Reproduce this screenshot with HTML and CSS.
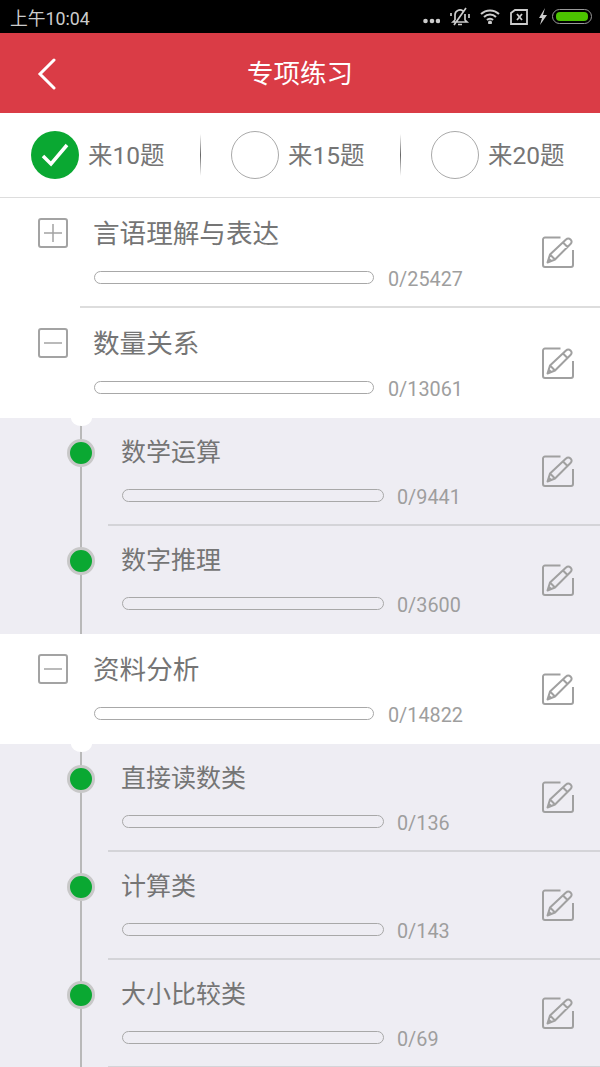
FILE: index.html
```html
<!DOCTYPE html>
<html lang="zh-CN">
<head>
  <meta charset="UTF-8">
  <title>专项练习</title>
  <link rel="stylesheet" href="styles.css">
</head>
<body>

<svg class="defs" width="0" height="0">
  <symbol id="edit" viewBox="0 0 32 32">
    <path d="M18.500 1.500H3a2 2 0 0 0-2 2v25.500a2 2 0 0 0 2 2h26a2 2 0 0 0 2-2V14" fill="none" stroke="#a0a0a0" stroke-width="2"/>
    <path d="M24 3.500c1.500-1.500 3-1.500 4.500 0s1.500 3 0 4.500L13 23.500 5.500 26.500 8 18.500zM21 6.500l5 5M8 18.500l5 5" fill="none" stroke="#a0a0a0" stroke-width="2" stroke-linejoin="round"/>
    <path d="M7.500 22l2.500 2.500-4.500 2z" fill="#a0a0a0"/>
  </symbol>
</svg>

<div class="status">
  <span class="clock">上午10:04</span>
  <div class="status-icons">
    <svg class="status-dots" width="18" height="6" viewBox="0 0 18 6"><circle cx="3.500" cy="3" r="2.300" fill="#ccc"/><circle cx="10" cy="3" r="2.300" fill="#ccc"/><circle cx="16" cy="3" r="2.300" fill="#ccc"/></svg>
    <svg width="20" height="20" viewBox="0 0 20 20" fill="none" stroke="#ccc" stroke-width="1.700"><path d="M5 13V8a5 5 0 0 1 8-4M15 7v6l2 2H3l2-2M8 17.500h4M1 9V6M19 11V7M16 1L4 18"/></svg>
    <svg width="20" height="15" viewBox="0 0 20 15" fill="none" stroke="#ccc" stroke-width="2"><path d="M1 5a13 13 0 0 1 18 0M4 8a8.500 8.500 0 0 1 12 0M7 11a4 4 0 0 1 6 0"/><circle cx="10" cy="13.500" r="1" fill="#ccc"/></svg>
    <svg width="18" height="16" viewBox="0 0 18 16" fill="none" stroke="#ccc" stroke-width="1.800"><path d="M5 1h12v14H1V4zM7 5l5 6M12 5l-5 6"/></svg>
    <svg width="10" height="17" viewBox="0 0 10 17"><path d="M7 0L1 10h3l-2 7 7-10H5z" fill="#ccc"/></svg>
    <div class="battery"><div class="battery-fill"></div></div>
  </div>
</div>

<div class="topbar">
  <svg class="back" width="20" height="32" viewBox="0 0 20 32" fill="none" stroke="#fff" stroke-width="3" stroke-linecap="round"><path d="M17 2L3 16l14 14"/></svg>
  <span>专项练习</span>
</div>

<div class="options">
  <div class="opt">
    <svg class="radio" width="48" height="48" viewBox="0 0 48 48"><circle cx="24" cy="24" r="24" fill="#0aa832"/><path d="M12 25l8 8 16-19" fill="none" stroke="#fff" stroke-width="3.500"/></svg>
    <span>来10题</span>
    <i class="opt-sep"></i>
  </div>
  <div class="opt">
    <div class="radio radio-off"></div>
    <span>来15题</span>
    <i class="opt-sep"></i>
  </div>
  <div class="opt">
    <div class="radio radio-off"></div>
    <span>来20题</span>
  </div>
</div>

<div class="list">
  <div class="row">
    <div class="mark"><svg width="30" height="30" viewBox="0 0 30 30" fill="none" stroke="#a3a3a3"><rect x="1" y="1" width="28" height="28" rx="2" stroke-width="2"/><path d="M6 15h18M15 6v18" stroke-width="1.500"/></svg></div>
    <div class="body">
      <div class="main">
        <div class="name">言语理解与表达</div>
        <div class="meter"><div class="bar"></div><span class="count">0/25427</span></div>
      </div>
      <svg class="edit"><use href="#edit"/></svg>
    </div>
  </div>

  <div class="row">
    <div class="mark"><svg width="30" height="30" viewBox="0 0 30 30" fill="none" stroke="#a3a3a3"><rect x="1" y="1" width="28" height="28" rx="2" stroke-width="2"/><path d="M6 15h18" stroke-width="1.500"/></svg></div>
    <div class="body no-line">
      <div class="main">
        <div class="name">数量关系</div>
        <div class="meter"><div class="bar"></div><span class="count">0/13061</span></div>
      </div>
      <svg class="edit"><use href="#edit"/></svg>
    </div>
  </div>

  <div class="row sub first">
    <div class="mark"><i class="dot"></i></div>
    <div class="body">
      <div class="main">
        <div class="name">数学运算</div>
        <div class="meter"><div class="bar"></div><span class="count">0/9441</span></div>
      </div>
      <svg class="edit"><use href="#edit"/></svg>
    </div>
  </div>

  <div class="row sub">
    <div class="mark"><i class="dot"></i></div>
    <div class="body no-line">
      <div class="main">
        <div class="name">数字推理</div>
        <div class="meter"><div class="bar"></div><span class="count">0/3600</span></div>
      </div>
      <svg class="edit"><use href="#edit"/></svg>
    </div>
  </div>

  <div class="row">
    <div class="mark"><svg width="30" height="30" viewBox="0 0 30 30" fill="none" stroke="#a3a3a3"><rect x="1" y="1" width="28" height="28" rx="2" stroke-width="2"/><path d="M6 15h18" stroke-width="1.500"/></svg></div>
    <div class="body no-line">
      <div class="main">
        <div class="name">资料分析</div>
        <div class="meter"><div class="bar"></div><span class="count">0/14822</span></div>
      </div>
      <svg class="edit"><use href="#edit"/></svg>
    </div>
  </div>

  <div class="row sub first">
    <div class="mark"><i class="dot"></i></div>
    <div class="body">
      <div class="main">
        <div class="name">直接读数类</div>
        <div class="meter"><div class="bar"></div><span class="count">0/136</span></div>
      </div>
      <svg class="edit"><use href="#edit"/></svg>
    </div>
  </div>

  <div class="row sub">
    <div class="mark"><i class="dot"></i></div>
    <div class="body">
      <div class="main">
        <div class="name">计算类</div>
        <div class="meter"><div class="bar"></div><span class="count">0/143</span></div>
      </div>
      <svg class="edit"><use href="#edit"/></svg>
    </div>
  </div>

  <div class="row sub">
    <div class="mark"><i class="dot"></i></div>
    <div class="body">
      <div class="main">
        <div class="name">大小比较类</div>
        <div class="meter"><div class="bar"></div><span class="count">0/69</span></div>
      </div>
      <svg class="edit"><use href="#edit"/></svg>
    </div>
  </div>
</div>

</body>
</html>
```

FILE: styles.css
```css
* {
  box-sizing: border-box;
}
html, body {
  height: 1067px;
  overflow: hidden;
}
body {
  margin: 0;
  background: #fff;
  font-family: Roboto, 'Noto Sans CJK SC', sans-serif;
  color: #757575;
}
.defs {
  display: block;
  height: 0;
}
.status {
  height: 33px;
  background: #000;
  display: flex;
  align-items: center;
  justify-content: space-between;
  padding: 0 8px 0 10px;
  color: #ccc;
  font-size: 17.800px;
}
.status-icons {
  display: flex;
  align-items: center;
  gap: 10px;
}
.status-dots {
  margin-top: 9px;
}
.battery {
  width: 40px;
  height: 15px;
  margin-left: -6px;
  padding: 2px 3px;
  border: 1.500px solid #999;
  border-radius: 8px;
}
.battery-fill {
  width: 100%;
  height: 100%;
  background: #4cc300;
  border-radius: 4px;
}
.topbar {
  position: relative;
  height: 80px;
  padding-bottom: 3px;
  background: #da3c46;
  color: #fff;
  font-size: 26.500px;
  display: flex;
  align-items: center;
  justify-content: center;
}
.back {
  position: absolute;
  left: 37px;
  top: 25px;
}
.options {
  height: 85px;
  display: flex;
  border-bottom: 1px solid #ddd;
}
.opt {
  width: 200px;
  padding-left: 31px;
  display: flex;
  align-items: center;
  font-size: 24.500px;
}
.opt span {
  margin-bottom: 3px;
}
.radio {
  width: 48px;
  height: 48px;
  margin-right: 9px;
  flex: none;
}
.radio-off {
  border: 1px solid #aaa;
  border-radius: 50%;
}
.opt-sep {
  width: 1px;
  height: 42px;
  margin: 0 -1px 0 auto;
  background: linear-gradient(to bottom, #fff, #666 50%, #fff);
}
.row {
  display: flex;
  height: 110px;
  background: #fff;
}
.sub {
  height: 108px;
  background: #eeedf3;
}
.mark {
  position: relative;
  flex: none;
  width: 80px;
  padding: 20px 0 0 38px;
}
.sub .mark {
  width: 108px;
  padding: 0;
}
.sub .mark::before {
  content: "";
  position: absolute;
  left: 80px;
  top: 0;
  bottom: 0;
  width: 2px;
  background: #b9b9b9;
}
.first .mark::after {
  content: "";
  position: absolute;
  left: 71px;
  top: 0;
  width: 21px;
  height: 8px;
  border-radius: 0 0 11px 11px / 0 0 8px 8px;
  background: #fff;
}
.dot {
  position: absolute;
  left: 67px;
  top: 21px;
  width: 28px;
  height: 28px;
  border-radius: 50%;
  background: #0aa832;
  border: 3px solid #c8c8c8;
}
.body {
  flex: 1;
  display: flex;
  align-items: center;
  justify-content: space-between;
  padding: 0 26px 0 14px;
  border-bottom: 2px solid #ddd;
}
.sub .body {
  border-bottom-color: #d4d4d8;
}
.no-line,
.sub .no-line {
  border-bottom: 0;
}
.main {
  align-self: flex-start;
  padding-top: 20px;
}
.sub .main {
  padding-top: 19px;
}
.name {
  margin: 1px 0 0 -1px;
  font-size: 26.600px;
  line-height: 30px;
}
.sub .name {
  font-size: 25px;
}
.meter {
  display: flex;
  align-items: center;
  margin-top: 15px;
}
.sub .meter {
  margin-top: 14px;
}
.bar {
  width: 280px;
  height: 13px;
  border: 1.500px solid #a8a8a8;
  border-radius: 7px;
}
.sub .bar {
  width: 262px;
}
.count {
  margin: 6px 0 0 14px;
  font-size: 19.800px;
  line-height: 20px;
  color: #9e9e9e;
}
.sub .count {
  margin-left: 13px;
}
.edit {
  width: 32px;
  height: 32px;
  flex: none;
}
```
